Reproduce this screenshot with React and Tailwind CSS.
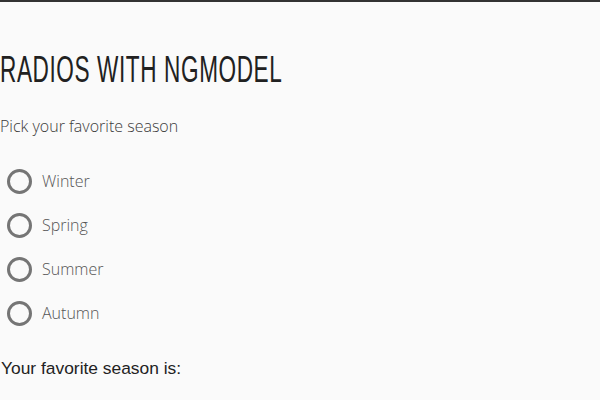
const seasons = ['Winter', 'Spring', 'Summer', 'Autumn']

export default function App() {
  return (
    <div className="w-[600px] h-[400px] bg-[#fafafa] border-t-2 border-[#333] overflow-hidden">
      <h1 className="mt-[48px] h-[40px] text-[37px] leading-[40px] text-[#212121] whitespace-nowrap font-['Liberation_Sans_Narrow','Liberation_Sans',sans-serif] origin-left scale-x-[0.61] tracking-[1px]">
        RADIOS WITH NGMODEL
      </h1>
      <p className="mt-[26px] text-[16px] leading-[20px] font-light text-[#3a3a3a] font-['Open_Sans',sans-serif]">
        Pick your favorite season
      </p>
      <div className="mt-[33px] flex flex-col gap-[20px]">
        {seasons.map(s => (
          <label key={s} className="flex items-center h-[24px] pl-[7px]">
            <span className="w-[25px] h-[25px] rounded-full border-[3px] border-[#757575]" />
            <span className="ml-[10px] text-[16px] font-light text-[#555] font-['Open_Sans',sans-serif]">{s}</span>
          </label>
        ))}
      </div>
      <p className="mt-[33px] pl-[1px] text-[17.4px] leading-[20px] text-[#222] font-['Liberation_Sans',sans-serif]">
        Your favorite season is:
      </p>
    </div>
  )
}
